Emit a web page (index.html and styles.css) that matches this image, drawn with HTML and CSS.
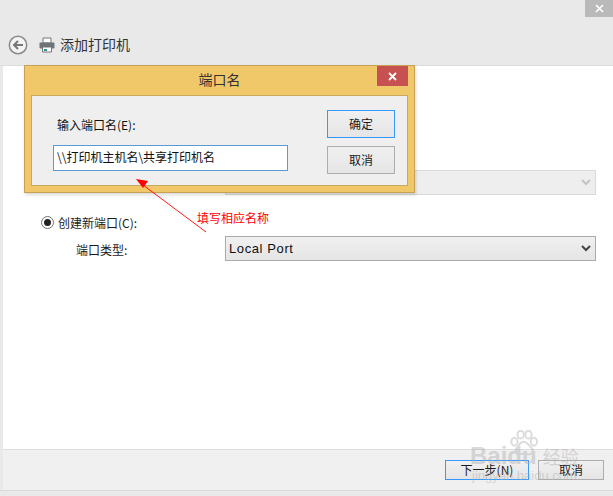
FILE: index.html
```html
<!DOCTYPE html>
<html lang="zh">
<head>
<meta charset="utf-8">
<title>添加打印机</title>
<link rel="stylesheet" href="styles.css">
</head>
<body>
<div class="window">
  <div class="chrome">
    <div class="chrome-top"><button class="win-close"><svg width="9" height="9" viewBox="0 0 9 9"><path d="M1 1l7 7M8 1L1 8" stroke="#fff" stroke-width="1.7"/></svg></button></div>
    <div class="nav">
      <svg class="back" width="20" height="20" viewBox="0 0 20 20"><circle cx="10" cy="10" r="8.7" fill="#f4f4f4" stroke="#8a8a8a" stroke-width="1.5"/><path d="M15 10H6.5M10 6l-4 4 4 4" fill="none" stroke="#777" stroke-width="2"/></svg>
      <svg class="printer" width="16" height="16" viewBox="0 0 16 16"><path d="M4 1h8v5H4z" fill="#fff" stroke="#777"/><rect x="0.5" y="5.5" width="15" height="6" rx="1" fill="#6f7478"/><path d="M3.5 10h9v5h-9z" fill="#fff" stroke="#777"/><path d="M5 12h3v2H5z" fill="#2f8f9a"/></svg>
      <span class="nav-title">添加打印机</span>
    </div>
  </div>
  <div class="content">
    <div class="spacer-top"></div>
    <div class="select disabled"><span></span><svg width="10" height="7" viewBox="0 0 10 7"><path d="M1 1l4 4 4-4" fill="none" stroke="#c4c4c4" stroke-width="2"/></svg></div>
    <div class="radio-row"><span class="radio"><span class="radio-dot"></span></span><span>创建新端口(C):</span></div>
    <div class="port-row"><span class="port-label">端口类型:</span>
      <div class="select"><span>Local Port</span><svg width="10" height="7" viewBox="0 0 10 7"><path d="M1 1l4 4 4-4" fill="none" stroke="#444" stroke-width="2"/></svg></div>
    </div>
  </div>
  <div class="footer">
    <button class="btn next">下一步(N)</button>
    <button class="btn cancel">取消</button>
  </div>
  <div class="bottom"></div>
</div>

<div class="dialog">
  <div class="dialog-title"><span>端口名</span><button class="dlg-close"><svg width="9" height="9" viewBox="0 0 9 9"><path d="M1 1l7 7M8 1L1 8" stroke="#fff" stroke-width="1.8"/></svg></button></div>
  <div class="dialog-body">
    <div class="dialog-main">
      <div class="dialog-label">输入端口名(E):</div>
      <div class="dialog-input">\\打印机主机名\共享打印机名</div>
    </div>
    <div class="dialog-btns">
      <button class="btn primary">确定</button>
      <button class="btn">取消</button>
    </div>
  </div>
</div>

<svg class="arrow" width="80" height="60" viewBox="0 0 80 60"><path d="M71 54L8 7" stroke="#f00" stroke-width="0.9" fill="none"/><path d="M1 1l12 2-5 7z" fill="#f00"/></svg>
<div class="note">填写相应名称</div>

<div class="watermark">
  <svg class="paw" width="32" height="28" viewBox="0 0 40 36"><g fill="none" stroke="#a8a8a8" stroke-width="2.5"><ellipse cx="9" cy="15" rx="4" ry="5"/><ellipse cx="17" cy="6" rx="4" ry="5"/><ellipse cx="27" cy="6" rx="4" ry="5"/><ellipse cx="34" cy="15" rx="4" ry="5"/><path d="M21 15c5 0 6 5 10 8 4 4 0 10-6 8-3-1-5-1-8 0-6 1-8-4-5-8 3-3 4-8 9-8z"/></g></svg>
  <div class="wm-main"><span class="wm-baidu">Baidu</span><span class="wm-jy">经验</span></div>
  <div class="wm-url">jingyan.baidu.com</div>
</div>
</body>
</html>
```
FILE: styles.css
```css
* { box-sizing: border-box; }
html, body { margin: 0; padding: 0; }
body {
  width: 613px; height: 496px; overflow: hidden; position: relative;
  font-family: "Noto Sans CJK SC", "Liberation Sans", sans-serif;
  font-size: 12px; color: #1a1a1a; background: #e9e9e9;
}
button { font: inherit; color: inherit; padding: 0; }
.window { display: flex; flex-direction: column; height: 496px; }
.chrome { height: 66px; border-bottom: 1px solid #dcdcdc; flex: none; }
.chrome-top { height: 35px; display: flex; justify-content: flex-end; align-items: flex-start; }
.win-close { width: 28px; height: 17px; background: #b9b9b9; border: 0; display: flex; align-items: center; justify-content: center; }
.nav { display: flex; align-items: center; padding-left: 8px; height: 20px; }
.back { margin-right: 11px; }
.printer { margin-right: 5px; }
.nav-title { font-size: 14px; line-height: 20px; color: #333; padding-bottom: 2px; }
.content { flex: 1; margin-left: 3px; background: #fff; padding-left: 38px; padding-right: 17px; display: flex; flex-direction: column; }
.spacer-top { height: 104px; flex: none; }
.select {
  height: 25px; width: 371px; border: 1px solid #ababab; background: linear-gradient(#f0f0f0, #e5e5e5);
  display: flex; align-items: center; justify-content: space-between; padding: 0 4px 0 3px;
  font-family: "Liberation Sans", sans-serif; font-size: 13px; letter-spacing: 0.6px; color: #111;
}
.select.disabled { background: #eeeeee; border: 1px solid #d9d9d9; height: 25px; margin-left: 184px; }
.radio-row { display: flex; align-items: center; gap: 4px; height: 16px; margin-top: 19px; }
.radio { width: 13px; height: 13px; border: 1px solid #707070; border-radius: 50%; display: flex; align-items: center; justify-content: center; background: #fff; }
.radio-dot { width: 7px; height: 7px; border-radius: 50%; background: #222; }
.port-row { display: flex; align-items: center; margin-top: 6px; margin-left: 35px; }
.port-label { width: 149px; padding-top: 2px; }
.footer { height: 41px; flex: none; margin-left: 3px; background: #f0f0f0; border-top: 1px solid #dcdcdc; display: flex; justify-content: flex-end; align-items: flex-start; gap: 9px; padding: 10px 9px 0 0; }
.bottom { height: 6px; flex: none; border-top: 1px solid #dcdcdc; }
.btn { width: 68px; height: 28px; border: 1px solid #adadad; background: linear-gradient(#f0f0f0, #e5e5e5); display: block; padding-bottom: 2px; }
.btn.primary { border-color: #3399ff; }
.next { width: 84px; height: 20px; border-color: #3399ff; line-height: 16px; padding-bottom: 0; }
.cancel { width: 66px; height: 20px; line-height: 16px; padding-bottom: 0; }
.dialog {
  position: absolute; left: 24px; top: 65px; width: 391px; height: 128px;
  background: #f0c769; border: 1px solid #c6a254; box-shadow: 1px 2px 3px rgba(0,0,0,0.15);
  padding: 0 6px 6px; display: flex; flex-direction: column;
}
.dialog-title { height: 29px; flex: none; display: flex; align-items: center; justify-content: center; position: relative; font-size: 14px; color: #333; padding-bottom: 3px; }
.dlg-close { position: absolute; right: 0; top: 0; width: 31px; height: 20px; background: #c75050; border: 0; display: flex; align-items: center; justify-content: center; }
.dialog-body { flex: 1; background: #efefef; border: 1px solid #c9a860; display: flex; justify-content: space-between; padding: 14px 12px 0 21px; }
.dialog-main { width: 235px; }
.dialog-label { margin: 6px 0 0 4px; height: 17px; line-height: 17px; color: #111; }
.dialog-input { margin-top: 12px; height: 26px; border: 1px solid #5b9bd5; background: #fff; line-height: 22px; padding-left: 3px; color: #111; font-size: 12px; }
.dialog-btns { display: flex; flex-direction: column; gap: 8px; }
.arrow { position: absolute; left: 135px; top: 178px; }
.note { position: absolute; left: 197px; top: 209px; color: #f00; font-size: 12px; line-height: 17px; }
.watermark { position: absolute; left: 470px; top: 430px; width: 130px; height: 52px; opacity: 0.4; color: #a8a8a8; }
.paw { position: absolute; left: 37px; top: 0; }
.wm-main { position: absolute; left: 0; top: 14px; display: flex; align-items: center; white-space: nowrap; line-height: 24px; }
.wm-baidu { font-family: "Liberation Sans", sans-serif; font-size: 24px; font-weight: 700; }
.wm-jy { font-size: 18px; margin-left: 6px; }
.wm-url { position: absolute; left: 2px; top: 39px; font-family: "Liberation Sans", sans-serif; font-size: 13px; line-height: 14px; white-space: nowrap; }
```
